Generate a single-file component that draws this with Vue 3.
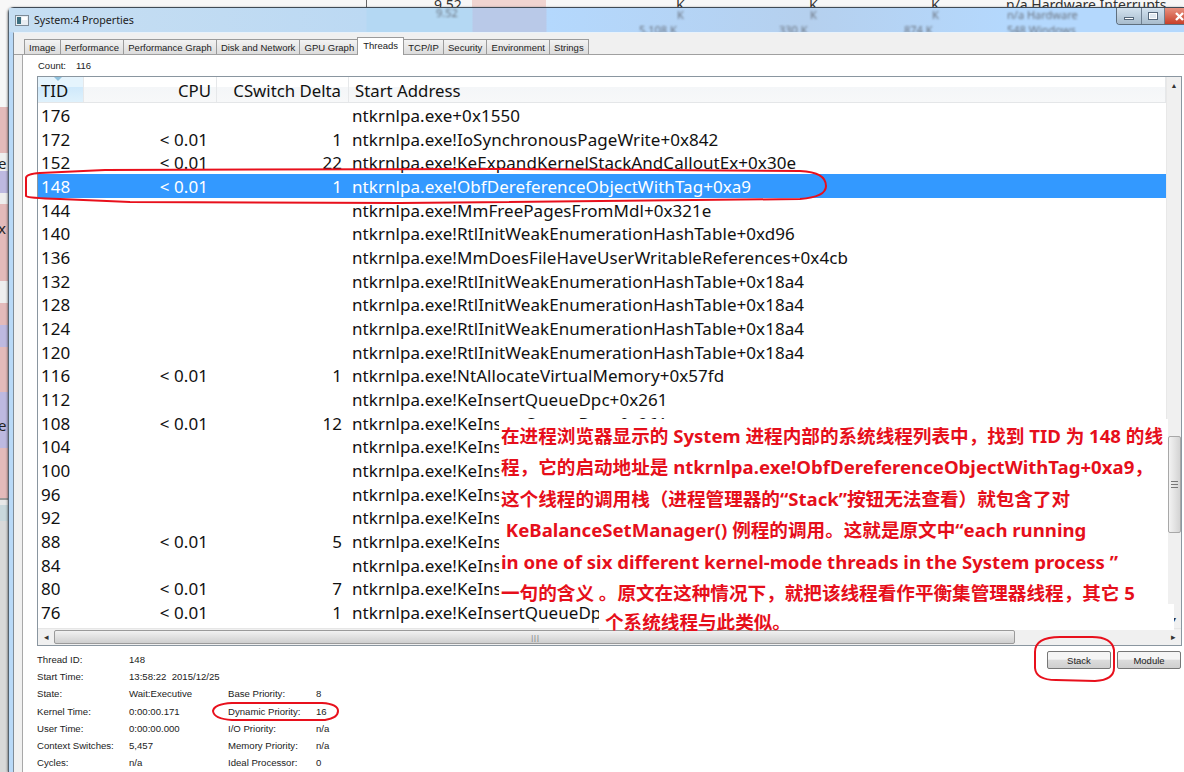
<script setup>
const addr = 'ntkrnlpa.exe!KeInsertQueueDpc+0x261'
const rows = [
  ['176', '', '', 'ntkrnlpa.exe+0x1550'],
  ['172', '< 0.01', '1', 'ntkrnlpa.exe!IoSynchronousPageWrite+0x842'],
  ['152', '< 0.01', '22', 'ntkrnlpa.exe!KeExpandKernelStackAndCalloutEx+0x30e'],
  ['148', '< 0.01', '1', 'ntkrnlpa.exe!ObfDereferenceObjectWithTag+0xa9'],
  ['144', '', '', 'ntkrnlpa.exe!MmFreePagesFromMdl+0x321e'],
  ['140', '', '', 'ntkrnlpa.exe!RtlInitWeakEnumerationHashTable+0xd96'],
  ['136', '', '', 'ntkrnlpa.exe!MmDoesFileHaveUserWritableReferences+0x4cb'],
  ['132', '', '', 'ntkrnlpa.exe!RtlInitWeakEnumerationHashTable+0x18a4'],
  ['128', '', '', 'ntkrnlpa.exe!RtlInitWeakEnumerationHashTable+0x18a4'],
  ['124', '', '', 'ntkrnlpa.exe!RtlInitWeakEnumerationHashTable+0x18a4'],
  ['120', '', '', 'ntkrnlpa.exe!RtlInitWeakEnumerationHashTable+0x18a4'],
  ['116', '< 0.01', '1', 'ntkrnlpa.exe!NtAllocateVirtualMemory+0x57fd'],
  ['112', '', '', addr],
  ['108', '< 0.01', '12', addr],
  ['104', '', '', addr],
  ['100', '', '', addr],
  ['96', '', '', addr],
  ['92', '', '', addr],
  ['88', '< 0.01', '5', addr],
  ['84', '', '', addr],
  ['80', '< 0.01', '7', addr],
  ['76', '< 0.01', '1', addr],
]
// rows whose address runs under the white note
const covered = ['104', '100', '96', '92', '88', '84', '80']
const tabs = ['Image', 'Performance', 'Performance Graph', 'Disk and Network', 'GPU Graph', 'Threads', 'TCP/IP', 'Security', 'Environment', 'Strings']
const info = [
  ['Thread ID:', '148', '', ''],
  ['Start Time:', '13:58:22  2015/12/25', '', ''],
  ['State:', 'Wait:Executive', 'Base Priority:', '8'],
  ['Kernel Time:', '0:00:00.171', 'Dynamic Priority:', '16'],
  ['User Time:', '0:00:00.000', 'I/O Priority:', 'n/a'],
  ['Context Switches:', '5,457', 'Memory Priority:', 'n/a'],
  ['Cycles:', 'n/a', 'Ideal Processor:', '0'],
]
const note = [
  '在进程浏览器显示的 System 进程内部的系统线程列表中，找到 TID 为 148 的线',
  '程，它的启动地址是 ntkrnlpa.exe!ObfDereferenceObjectWithTag+0xa9，',
  '这个线程的调用栈（进程管理器的“Stack”按钮无法查看）就包含了对',
  ' KeBalanceSetManager() 例程的调用。这就是原文中“each running',
  'in one of six different kernel-mode threads in the System process ”',
  '一句的含义 。原文在这种情况下，就把该线程看作平衡集管理器线程，其它 5',
]
// strips of the window behind, seen down the left edge
const strips = [
  [107, 46, '#e3baba'], [153, 18, '#efefef'], [171, 22, '#bdb9e0'], [193, 11, '#eeeeee'],
  [204, 77, '#e3baba'], [281, 22, '#efefef'], [303, 22, '#e3baba'], [325, 22, '#bdb9e0'],
  [347, 45, '#e3baba'], [392, 56, '#bdb9e0'], [448, 50, '#e3baba'], [498, 2, '#9a9a9a'],
  [500, 5, '#e8e8e8'], [505, 16, '#c9d8dc'], [521, 251, '#d9d9d9'],
]
</script>

<template>
  <div class="desk">
    <div class="behind">
      <span v-for="s in strips" :key="s[0]" class="strip" :style="{ top: s[0] + 'px', height: s[1] + 'px', background: s[2] }"></span>
      <span class="edge e1">e</span><span class="edge e2">x</span><span class="edge e3">e</span>
      <span class="top t0"></span>
      <span class="top t1"></span>
      <span class="cut" style="left:434px">9.52</span>
      <span class="cut" style="left:676px">K</span>
      <span class="cut" style="left:809px">K</span>
      <span class="cut" style="left:931px">K</span>
      <span class="cut" style="left:1006px">n/a Hardware Interrupts</span>
    </div>
    <div class="win">
      <div class="title">
        <svg class="appicon" width="14" height="11" viewBox="0 0 14 11">
          <rect x="0.5" y="0.5" width="13" height="10" fill="#e8edf2" stroke="#7d8a96"/>
          <rect x="2" y="2" width="4" height="7" fill="#3c6f80"/>
          <rect x="7" y="2" width="5" height="3" fill="#fff"/>
        </svg>
        <span class="ttext">System:4 Properties</span>
        <span class="blur" style="left:427px;top:-3px">9.52</span>
        <span class="blur" style="left:668px;top:-1px">K</span>
        <span class="blur" style="left:801px;top:-1px">K</span>
        <span class="blur" style="left:923px;top:-1px">K</span>
        <span class="blur" style="left:998px;top:-1px">n/a Hardware</span>
        <span class="blur" style="left:630px;top:14px">5,108 K</span>
        <span class="blur" style="left:770px;top:14px">330 K</span>
        <span class="blur" style="left:895px;top:14px">874 K</span>
        <span class="blur" style="left:998px;top:14px">548 Windows</span>
        <div class="ctrls">
          <span class="cb w25"><i class="mn"></i></span>
          <span class="cb w23"><i class="mx"></i></span>
          <span class="cb close">
            <svg width="19" height="17" viewBox="0 0 19 17"><path d="M11 5 L18 12 M18 5 L11 12" stroke="#fff" stroke-width="2.4"/></svg>
          </span>
        </div>
      </div>
      <div class="client">
        <div class="tabs">
          <span v-for="t in tabs" :key="t" class="tab" :class="{on: t === 'Threads'}">{{ t }}</span>
        </div>
        <div class="page">
          <div class="count"><span>Count:</span><span>116</span></div>
          <div class="list">
            <div class="main">
              <div class="hd">
                <span class="c1 sorted">TID</span>
                <span class="c2">CPU</span>
                <span class="c3">CSwitch Delta</span>
                <span class="c4">Start Address</span>
              </div>
              <div class="body">
                <div v-for="r in rows" :key="r[0]" class="row" :class="{sel: r[0] === '148'}">
                  <span class="c1">{{ r[0] }}</span>
                  <span class="c2">{{ r[1] }}</span>
                  <span class="c3">{{ r[2] }}</span>
                  <span class="c4" :class="{ clip: covered.includes(r[0]), clip2: r[0] === '76' }">{{ r[3] }}</span>
                </div>
              </div>
            </div>
            <div class="vbar">
              <span class="arr">▲</span>
              <span class="vthumb"><em></em></span>
              <span class="arr">▼</span>
            </div>
            <div class="hbar">
              <span class="harr">◂</span>
              <span class="hthumb"><em>|||</em></span>
              <span class="harr">▸</span>
            </div>
            <div class="note">
              <p v-for="(l, i) in note" :key="i">{{ l }}</p>
            </div>
            <div class="note2">个系统线程与此类似。</div>
          </div>
          <div class="foot">
            <div class="info">
              <div v-for="r in info" :key="r[0]" class="irow">
                <span>{{ r[0] }}</span><span>{{ r[1] }}</span><span>{{ r[2] }}</span><span>{{ r[3] }}</span>
              </div>
            </div>
            <div class="btns">
              <button>Stack</button>
              <button>Module</button>
            </div>
          </div>
        </div>
      </div>
    </div>
    <svg class="marks" width="1184" height="772" viewBox="0 0 1184 772" fill="none" stroke="#e8101c" stroke-width="2">
      <path d="M105 170 L40 173 Q26 174 26 178 L26 196 Q27 198 60 199 L130 202 L400 203 L800 199 Q826 197 826 186 Q826 172 800 171 L500 169 Z"/>
      <path d="M1060 637 Q1035 637 1035 652 L1035 668 Q1036 680 1056 680 L1095 681 Q1114 680 1114 668 L1114 650 Q1112 637 1092 637 Z"/>
      <path d="M232 703 Q214 704 213 711 Q214 719 232 720 L325 720 Q338 718 338 711 Q338 704 322 703 Z"/>
    </svg>
  </div>
</template>

<style scoped>
.desk{position:relative;width:1184px;height:772px;overflow:hidden;background:#f7f7f7;font-family:"Noto Sans","Liberation Sans",sans-serif}
.behind{position:absolute;inset:0;overflow:hidden}
.strip{position:absolute;left:0;width:8px;display:block}
.edge{position:absolute;left:-2px;font-size:15px;color:#222;line-height:16px}
.e1{top:155px}
.e2{top:220px}
.e3{top:417px}
.top{position:absolute;top:0;height:7px;display:block}
.t0{left:366px;width:1px;background:#666}
.t1{left:472px;width:74px;background:#f0d4d0}
.cut{position:absolute;top:-5px;font-size:14px;color:#333;white-space:nowrap}
.win{position:absolute;left:8px;top:7px;width:1176px;height:765px;display:flex;flex-direction:column;background:#b9d9f7;border-top:1px solid #3f4a55;border-left:1px solid #55626e;border-radius:6px 0 0 0;box-sizing:border-box;box-shadow:-1px 0 2px rgba(0,0,0,.35)}
.title{height:24px;display:flex;align-items:center;padding-left:6px;position:relative;flex:none;overflow:hidden;background:linear-gradient(90deg,#c6def2 0,#bcd9f3 357px,#b4d8f3 358px,#b4d8f3 463px,#b9c9e8 464px,#b9c9e8 537px,#b4d8fd 538px,#b5d0ee 800px,#b4d8fd 1000px)}
.appicon{margin-right:5px}
.ttext{font-size:10.7px;color:#222;font-family:"Noto Sans",sans-serif}
.blur{position:absolute;color:#6b7480;filter:blur(1.2px);font-size:11px;white-space:nowrap}
.ctrls{position:absolute;right:0;top:0;display:flex;height:16px;border:1px solid #5f6f7e;border-top:0;border-right:0;border-radius:0 0 0 4px;overflow:hidden}
.cb{height:16px;display:flex;align-items:center;justify-content:center;background:linear-gradient(#d3e2ef,#a8bccd);border-right:1px solid #6f8091;box-sizing:border-box}
.w25{width:25px}
.w23{width:23px}
.mn{display:block;width:10px;height:3px;background:#fff;border:1px solid #55677a;margin-top:5px;box-sizing:border-box}
.mx{display:block;width:10px;height:8px;background:#dfe8f0;border:1px solid #55677a;box-shadow:inset 0 0 0 1px #fff;box-sizing:border-box}
.close{width:19px;background:linear-gradient(#e8917f,#c8402a);border:0}
.client{flex:1;margin-left:4px;background:#f0f0f0;border-left:1px solid #7f8c98;border-top:1px solid #e9f2fa;display:flex;flex-direction:column;min-height:0}
.tabs{height:22px;display:flex;align-items:flex-end;padding:0 0 0 10px;background:#f0f0f0;border-bottom:1px solid #a0a0a0;flex:none;box-sizing:border-box}
.tab{font-size:9.5px;height:14px;line-height:15px;padding:0 4.1px;background:linear-gradient(#f3f3f3,#dcdcdc);border:1px solid #9b9b9b;border-bottom:0;margin-right:-1px;color:#222;font-family:"Liberation Sans",sans-serif;white-space:nowrap}
.tab.on{height:17px;line-height:15px;background:#fff;padding:0 5px;margin:0 -1px -1px -1px;position:relative}
.page{flex:1;display:flex;flex-direction:column;padding-left:14px;margin-left:8px;border-left:1px solid #a8a8a8;min-height:0;background:#fff}
.count{height:21px;display:flex;gap:10px;font-size:9.5px;align-items:center;padding-left:1px;flex:none;color:#222;font-family:"Liberation Sans",sans-serif}
.list{position:relative;height:570px;width:1145px;border:1px solid #8a96a0;box-sizing:border-box;display:grid;grid-template-columns:1fr 15px;grid-template-rows:1fr 17px;flex:none}
.main{min-width:0;overflow:hidden}
.hd,.row{display:flex;color:#111;white-space:nowrap}
.hd{height:26px;line-height:28px;font-size:16.8px;background:linear-gradient(#fff 40%,#f4f6f8 41%,#f7f8f9);border-bottom:1px solid #e4e6e8;box-sizing:border-box}
.hd span{border-right:1px solid #e6e8ea}
.row{height:23.68px;line-height:26.4px;font-size:17px;letter-spacing:.055px}
.row.sel{background:#3399ff;color:#fff}
.c1{width:46px;padding-left:3px;box-sizing:border-box;flex:none}
.c2{width:133px;text-align:right;padding-right:9px;box-sizing:border-box;flex:none}
.c3{width:132px;text-align:right;padding-right:7px;box-sizing:border-box;flex:none}
.c4{padding-left:3px;flex:1}
.c4.clip{flex:none;width:150px;box-sizing:border-box;overflow:hidden;height:23.68px}
.c4.clip2{flex:none;width:250px;box-sizing:border-box;overflow:hidden;height:23.68px}
.hd .c2{padding-right:5px}
.hd .c4{padding-left:6px}
.sorted{background:linear-gradient(#e5f4fd 40%,#cfe9fb 41%,#dff1fc);position:relative}
.sorted::before{content:"";position:absolute;left:16px;top:0;border:4px solid transparent;border-top-color:#8fc1dd;border-bottom:0}
.vbar{background:#f0f0f0;display:flex;flex-direction:column;align-items:center;border-left:1px solid #e8e8e8}
.arr{font-size:7px;color:#333;height:17px;line-height:17px;flex:none}
.vthumb{width:13px;height:97px;margin-top:342px;margin-bottom:auto;background:linear-gradient(90deg,#f3f3f3,#d4d4d4);border:1px solid #a8a8a8;border-radius:2px;box-sizing:border-box;display:flex;align-items:center;justify-content:center;flex:none}
.vthumb em{display:block;width:7px;height:5px;border-top:1px solid #777;border-bottom:1px solid #777;background:linear-gradient(transparent 40%,#777 40%,#777 60%,transparent 60%)}
.hbar{grid-column:1 / 3;display:flex;align-items:center;background:#f0f0f0;border-top:1px solid #e6e6e6;box-sizing:border-box;position:relative}
.harr{width:16px;text-align:center;font-size:9px;color:#333;flex:none;line-height:14px}
.harr:last-child{margin-left:auto}
.hthumb{width:961px;height:14px;background:linear-gradient(#f1f1f1,#cfcfcf);border:1px solid #9a9a9a;border-radius:2px;box-sizing:border-box;display:flex;align-items:center;justify-content:center;flex:none}
.hthumb em{font-style:normal;font-size:7px;color:#666;letter-spacing:-1px}
.note{position:absolute;left:461px;top:342px;width:669px;height:185px;padding-top:1px;box-sizing:border-box;background:#fff;color:#e60f1b;font-weight:700;font-size:18.6px;font-family:"Noto Sans","Noto Sans CJK SC",sans-serif}
.note p{margin:0;height:31.4px;line-height:31.4px;padding-left:2px;white-space:pre}
.note2{position:absolute;left:561px;top:527px;width:569px;height:26px;background:#fff;padding-left:6px;color:#e60f1b;font-weight:700;font-size:18.6px;line-height:36px;font-family:"Noto Sans","Noto Sans CJK SC",sans-serif}
.foot{flex:1;display:flex;justify-content:space-between;min-height:0;padding-top:5px}
.info{font-size:9.6px;color:#222;font-family:"Liberation Sans",sans-serif}
.irow{height:17.2px;line-height:17.2px;display:grid;grid-template-columns:92px 99px 88px 30px;white-space:pre}
.btns{display:flex;gap:6px;height:19px;margin-right:3px}
.btns button{width:64px;height:18px;font-size:9.5px;font-family:"Liberation Sans",sans-serif;color:#222;border:1px solid #777;border-radius:2px;background:linear-gradient(#f5f5f5 45%,#dcdcdc 50%,#cfcfcf);padding:0}
.marks{position:absolute;left:0;top:0;pointer-events:none}
</style>
